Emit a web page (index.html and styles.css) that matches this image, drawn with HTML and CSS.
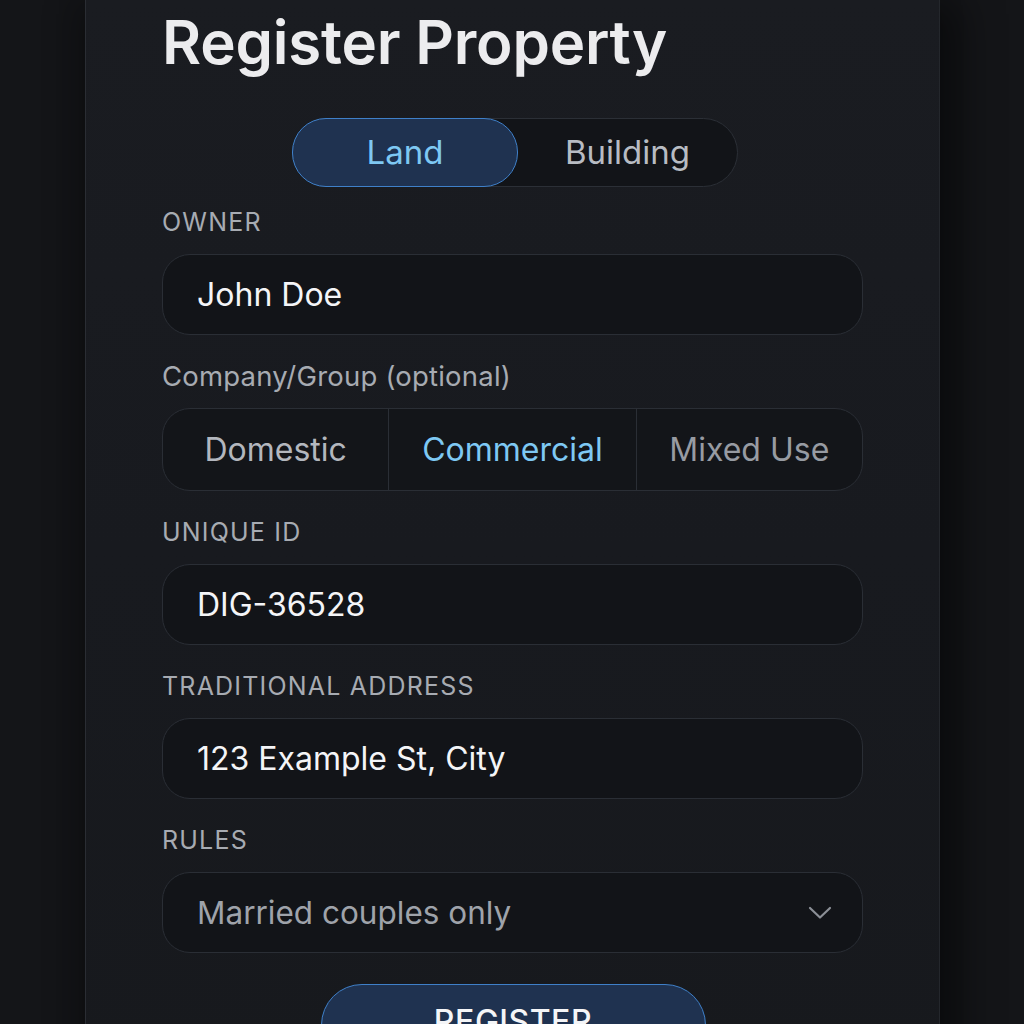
FILE: index.html
```html
<!DOCTYPE html>
<html>
<head>
<meta charset="utf-8">
<link rel="stylesheet" href="styles.css">
</head>
<body>
<div class="page">
  <main class="card">
    <h1 class="title">Register Property</h1>
    <div class="toggle-wrap">
      <div class="toggle">
        <div class="toggle-opt active">Land</div>
        <div class="toggle-opt">Building</div>
      </div>
    </div>
    <div class="fields">
      <div class="field">
        <div class="label upper">OWNER</div>
        <div class="input">John Doe</div>
      </div>
      <div class="field">
        <div class="label plain">Company/Group (optional)</div>
        <div class="segmented">
          <div class="seg seg-muted">Domestic</div>
          <div class="seg seg-active">Commercial</div>
          <div class="seg seg-dim">Mixed Use</div>
        </div>
      </div>
      <div class="field">
        <div class="label upper">UNIQUE ID</div>
        <div class="input">DIG-36528</div>
      </div>
      <div class="field">
        <div class="label upper">TRADITIONAL ADDRESS</div>
        <div class="input">123 Example St, City</div>
      </div>
      <div class="field">
        <div class="label upper">RULES</div>
        <div class="input select">
          <span class="placeholder">Married couples only</span>
          <svg class="chevron" width="24" height="14" viewBox="0 0 24 14"><path d="M2 2 L12 11.5 L22 2" fill="none" stroke="#8b8f96" stroke-width="2.2" stroke-linecap="round" stroke-linejoin="round"/></svg>
        </div>
      </div>
    </div>
    <div class="btn-wrap">
      <button class="btn">REGISTER</button>
    </div>
  </main>
</div>
</body>
</html>
```
FILE: styles.css
```css
* { box-sizing: border-box; }
html, body { margin: 0; padding: 0; }
body {
  background: #141518;
  font-family: Inter, "Noto Sans", sans-serif;
  height: 1024px;
  overflow: hidden;
}
.page {
  display: flex;
  height: 1024px;
  padding-left: 85px;
  overflow: hidden;
}
.card {
  width: 855px;
  height: 1100px;
  background: linear-gradient(180deg, #1a1c21 0%, #181a1f 50%, #17191d 100%);
  border-left: 1px solid #2a2d33;
  border-right: 1px solid #24272c;
  box-shadow: 20px 0 40px rgba(0,0,0,0.45), -10px 0 30px rgba(0,0,0,0.25);
  padding: 0 76px 0 76px;
}
.title {
  margin: 6px 0 0 0;
  font-size: 60px;
  line-height: 72px;
  font-weight: 600;
  color: #ececee;
  letter-spacing: -0.2px;
}
.toggle-wrap {
  margin-top: 40px;
  display: flex;
  justify-content: center;
  padding-left: 5px;
}
.toggle {
  width: 446px;
  height: 69px;
  border-radius: 35px;
  background: #121418;
  border: 1px solid #2b2f36;
  display: flex;
  align-items: stretch;
}
.toggle-opt {
  flex: 1;
  display: flex;
  align-items: center;
  justify-content: center;
  font-size: 33px;
  color: #b8bcc3;
  border-radius: 34px;
  padding-bottom: 1px;
}
.toggle-opt.active {
  flex: 0 0 226px;
  background: #1f3250;
  border: 1.5px solid #3f80c9;
  color: #7ec8f3;
  margin: -1px 0 -1px -1px;
}
.fields {
  margin-top: 22px;
  display: flex;
  flex-direction: column;
  gap: 28px;
}
.field {
  display: flex;
  flex-direction: column;
}
.label {
  font-size: 25px;
  line-height: 26px;
  color: #a7abb2;
  margin-bottom: 19px;
}
.label.upper {
  font-weight: 400;
  letter-spacing: 1.2px;
}
.label.plain {
  font-size: 27.5px;
  letter-spacing: 0.2px;
}
.input {
  height: 81px;
  border-radius: 28px;
  background: #121418;
  border: 1px solid #2a2e35;
  display: flex;
  align-items: center;
  padding: 0 34px;
  font-size: 32px;
  color: #f4f5f7;
}
.select {
  justify-content: space-between;
  padding-right: 30px;
}
.placeholder { color: #9fa3aa; font-size: 31.5px; }
.chevron { display: block; }
.segmented {
  height: 83px;
  border-radius: 28px;
  background: #131519;
  border: 1px solid #2a2e35;
  display: grid;
  grid-template-columns: 226fr 248fr 227fr;
  overflow: hidden;
}
.seg {
  display: flex;
  align-items: center;
  justify-content: center;
  font-size: 32px;
  border-left: 1px solid #2a2e35;
}
.seg:first-child { border-left: none; }
.seg-muted { color: #b3b7be; }
.seg-active { color: #7ec8f3; }
.seg-dim { color: #979ba2; }
.btn-wrap {
  margin-top: 31px;
  display: flex;
  justify-content: center;
  padding-left: 1px;
}
.btn {
  width: 385px;
  height: 82px;
  border-radius: 41px;
  background: #1f3250;
  border: 1.5px solid #3f80c9;
  color: #f4f5f7;
  font-family: Inter, "Noto Sans", sans-serif;
  font-size: 32px;
  font-weight: 500;
  letter-spacing: 0.5px;
  padding-bottom: 8px;
}
```
